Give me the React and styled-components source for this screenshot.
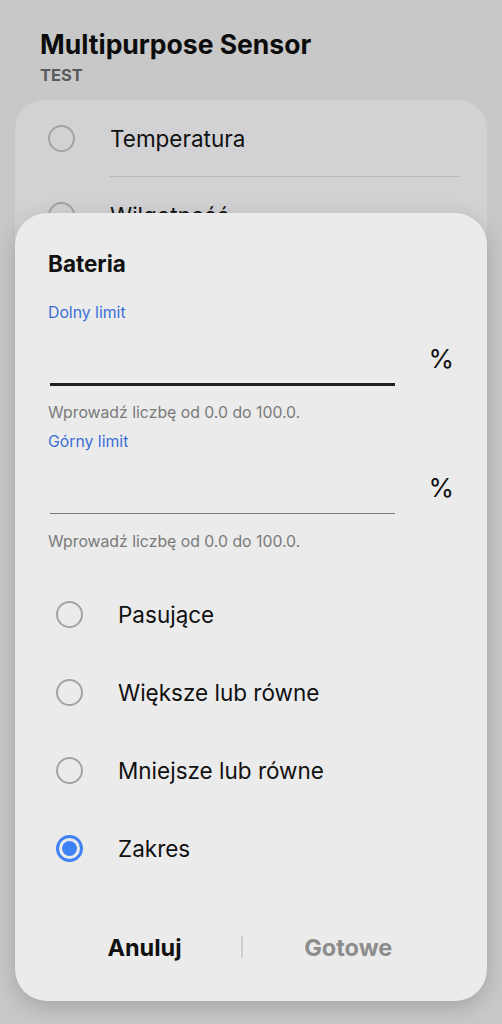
import React from 'react';
import styled, { createGlobalStyle } from 'styled-components';

const GlobalStyle = createGlobalStyle`
  html, body {
    margin: 0;
    padding: 0;
    background: #c8c8c8;
    font-family: Inter, Roboto, "Noto Sans", sans-serif;
  }
`;

const Screen = styled.div`
  position: relative;
  width: 502px;
  height: 1024px;
  overflow: hidden;
  background: #c8c8c8;
`;

const Header = styled.div`
  padding: 28px 40px 0;
  height: 100px;
  box-sizing: border-box;
`;

const Title = styled.h1`
  margin: 0;
  font-size: 26.5px;
  font-weight: 700;
  color: #0c0c0c;
  line-height: 32px;
`;

const Subtitle = styled.div`
  font-size: 16.5px;
  font-weight: 700;
  color: #5a5a5a;
  line-height: 20px;
  margin-top: 5px;
`;

const ListCard = styled.div`
  margin: 0 15px;
  background: #d2d2d4;
  border-radius: 30px;
  height: 300px;
  padding: 0 27px 0 33px;
`;

const ListRow = styled.div`
  display: flex;
  align-items: center;
  height: 77px;
`;

const ListRowText = styled.div`
  flex: 1;
  align-self: stretch;
  display: flex;
  align-items: center;
  margin-left: 35px;
  font-size: 22.5px;
  color: #111;
  border-bottom: ${(p) => (p.divider ? '1.5px solid #b8b8ba' : 'none')};
`;

const Dialog = styled.div`
  position: absolute;
  left: 15px;
  top: 213px;
  width: 472px;
  height: 788px;
  box-sizing: border-box;
  background: #ebebeb;
  border-radius: 32px;
  box-shadow: 0 6px 22px rgba(0, 0, 0, 0.18);
  padding: 38px 33px 0;
  display: flex;
  flex-direction: column;
`;

const DialogTitle = styled.div`
  font-size: 22.5px;
  font-weight: 700;
  color: #111;
  line-height: 26px;
`;

const FieldLabel = styled.div`
  font-size: 15.8px;
  color: #3b6fd8;
  line-height: 20px;
  margin-top: ${(p) => p.top}px;
`;

const FieldRow = styled.div`
  display: flex;
  align-items: flex-end;
  height: 63px;
`;

const InputLine = styled.div`
  margin-left: 2px;
  width: 345px;
  height: 0;
  border-bottom: ${(p) => (p.active ? '3px solid #222' : '1.5px solid #7a7a7a')};
  margin-bottom: ${(p) => (p.active ? '0' : '1px')};
`;

const Unit = styled.div`
  margin-left: auto;
  font-size: 26px;
  color: #111;
  align-self: center;
  margin-top: 8px;
  text-align: right;
`;

const Helper = styled.div`
  font-size: 15.8px;
  color: #7a7a7a;
  line-height: 18px;
  margin-top: 18px;
`;

const Options = styled.div`
  margin-top: 24px;
  display: flex;
  flex-direction: column;
`;

const OptionRow = styled.div`
  display: flex;
  align-items: center;
  height: 78px;
  padding-left: 8px;
`;

const Radio = styled.span`
  width: 27px;
  height: 27px;
  border-radius: 50%;
  box-sizing: border-box;
  border: ${(p) => (p.checked ? '3px solid #3f82f6' : '2px solid #a3a3a3')};
  display: flex;
  align-items: center;
  justify-content: center;
  flex-shrink: 0;

  &::after {
    content: '';
    display: ${(p) => (p.checked ? 'block' : 'none')};
    width: 15px;
    height: 15px;
    border-radius: 50%;
    background: #3f82f6;
  }
`;

const OptionText = styled.span`
  margin-left: 35px;
  font-size: 22.5px;
  color: #111;
`;

const Footer = styled.div`
  margin-top: auto;
  margin-bottom: 34px;
  display: flex;
  align-items: center;
  height: 40px;
`;

const FooterButton = styled.button`
  flex: ${(p) => (p.width ? `0 0 ${p.width}px` : '1')};
  background: none;
  border: none;
  font-family: inherit;
  font-size: 23.5px;
  font-weight: 700;
  color: ${(p) => (p.disabled ? '#8d8d8d' : '#111')};
  padding: 0;
`;

const FooterDivider = styled.span`
  width: 1.5px;
  height: 22px;
  background: #cfcfcf;
`;

const options = [
  { label: 'Pasujące' },
  { label: 'Większe lub równe' },
  { label: 'Mniejsze lub równe' },
  { label: 'Zakres', checked: true },
];

const App = () => {
  return (
    <Screen>
      <GlobalStyle />
      <Header>
        <Title>Multipurpose Sensor</Title>
        <Subtitle>TEST</Subtitle>
      </Header>
      <ListCard>
        <ListRow>
          <Radio />
          <ListRowText divider>Temperatura</ListRowText>
        </ListRow>
        <ListRow>
          <Radio />
          <ListRowText>Wilgotność</ListRowText>
        </ListRow>
      </ListCard>

      <Dialog>
        <DialogTitle>Bateria</DialogTitle>
        <FieldLabel top={26}>Dolny limit</FieldLabel>
        <FieldRow>
          <InputLine active />
          <Unit>%</Unit>
        </FieldRow>
        <Helper>Wprowadź liczbę od 0.0 do 100.0.</Helper>
        <FieldLabel top={10}>Górny limit</FieldLabel>
        <FieldRow>
          <InputLine />
          <Unit>%</Unit>
        </FieldRow>
        <Helper>Wprowadź liczbę od 0.0 do 100.0.</Helper>
        <Options>
          {options.map((o) => (
            <OptionRow key={o.label}>
              <Radio checked={o.checked} />
              <OptionText>{o.label}</OptionText>
            </OptionRow>
          ))}
        </Options>
        <Footer>
          <FooterButton width={193}>Anuluj</FooterButton>
          <FooterDivider />
          <FooterButton disabled>Gotowe</FooterButton>
        </Footer>
      </Dialog>
    </Screen>
  );
};

export default App;
